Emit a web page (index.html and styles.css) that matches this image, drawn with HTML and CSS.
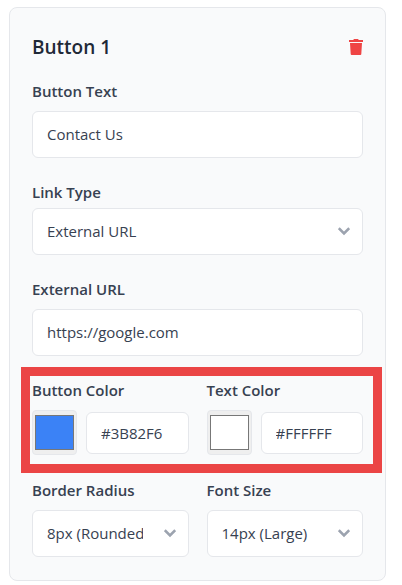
FILE: index.html
```
<!DOCTYPE html>
<html lang="en">
<head>
  <meta charset="UTF-8">
  <meta name="viewport" content="width=device-width, initial-scale=1.0">
  <title>Button Settings</title>
  <link rel="stylesheet" href="styles.css">
</head>
<body>
  <form class="card">
    <div class="card-header">
      <h2>Button 1</h2>
      <button type="button" class="delete" aria-label="Delete button">
        <svg viewBox="0 0 14 16" width="14" height="16" fill="currentColor">
          <path d="M0 1h4.3l.6-1h4.2l.6 1H14v2H0z"/>
          <path d="M1 4h12l-.7 11a1 1 0 0 1-1 1H2.700a1 1 0 0 1-1-1z"/>
        </svg>
      </button>
    </div>
    <div class="field">
      <label for="button-text">Button Text</label>
      <input type="text" id="button-text" class="control" value="Contact Us">
    </div>
    <div class="field field-tight">
      <label for="link-type">Link Type</label>
      <select id="link-type" class="control">
        <option>External URL</option>
      </select>
    </div>
    <div class="field">
      <label for="external-url">External URL</label>
      <input type="text" id="external-url" class="control" value="https://google.com">
    </div>
    <div class="columns highlight">
      <div class="field">
        <label for="button-color">Button Color</label>
        <div class="color-row">
          <input type="color" id="button-color" value="#3b82f6">
          <input type="text" class="control" aria-label="Button color hex" value="#3B82F6">
        </div>
      </div>
      <div class="field">
        <label for="text-color">Text Color</label>
        <div class="color-row">
          <input type="color" id="text-color" value="#ffffff">
          <input type="text" class="control" aria-label="Text color hex" value="#FFFFFF">
        </div>
      </div>
    </div>
    <div class="columns">
      <div class="field">
        <label for="border-radius">Border Radius</label>
        <select id="border-radius" class="control">
          <option>8px (Rounded)</option>
        </select>
      </div>
      <div class="field">
        <label for="font-size">Font Size</label>
        <select id="font-size" class="control">
          <option>14px (Large)</option>
        </select>
      </div>
    </div>
  </form>
</body>
</html>
```
FILE: styles.css
```
* {
  box-sizing: border-box;
}
body {
  margin: 0;
  padding: 7px 16px 4px 9px;
  background-color: #fff;
  font-family: "Segoe UI", "Open Sans", "Noto Sans", sans-serif;
  font-size: 15px;
  color: #374151;
}
.card {
  display: flex;
  flex-direction: column;
  gap: 23px;
  padding: 24px 22px 23px;
  background-color: #f9fafb;
  border: 1px solid #e5e7eb;
  border-radius: 8px;
}
.card-header {
  display: flex;
  justify-content: space-between;
  align-items: center;
  height: 29px;
  margin-bottom: -4px;
}
h2 {
  margin: 0;
  font-size: 19px;
  font-weight: 600;
  color: #1f2937;
}
.delete {
  display: flex;
  padding: 0;
  border: none;
  background: none;
  color: #ef4444;
  cursor: pointer;
}
.field {
  display: flex;
  flex-direction: column;
  gap: 9px;
  min-width: 0;
}
.field-tight {
  gap: 5px;
}
label {
  line-height: 22px;
  font-weight: 600;
}
.control {
  width: 100%;
  min-width: 0;
  height: 47px;
  padding: 0 14px 2px;
  border: 1px solid #e5e7eb;
  border-radius: 6px;
  background-color: #fff;
  font: inherit;
  color: inherit;
}
select.control {
  appearance: none;
  padding-right: 45px;
  background-image: url("data:image/svg+xml,%3Csvg xmlns='http://www.w3.org/2000/svg' viewBox='0 0 12 10' fill='none' stroke='%239ca3af' stroke-width='2.6'%3E%3Cpath d='M.8 1.200l5.200 5.200 5.200-5.200'/%3E%3C/svg%3E");
  background-repeat: no-repeat;
  background-position: right 12px center;
  background-size: 12px 10px;
}
.columns {
  display: grid;
  grid-template-columns: 1fr 1fr;
  gap: 18px;
}
.color-row {
  display: flex;
  align-items: center;
  gap: 9px;
}
.color-row .control {
  height: 42px;
  padding-bottom: 0;
}
input[type="color"] {
  flex: none;
  width: 45px;
  height: 45px;
  padding: 0;
  border: 1px solid #e5e7eb;
  border-radius: 4px;
  background-color: #efefef;
}
/* red frame drawn around the color settings */
.highlight {
  position: relative;
  padding-bottom: 1px;
}
.highlight::after {
  content: "";
  position: absolute;
  inset: -12px -19px -17px -11px;
  border: 9px solid #eb4545;
  pointer-events: none;
}
```
